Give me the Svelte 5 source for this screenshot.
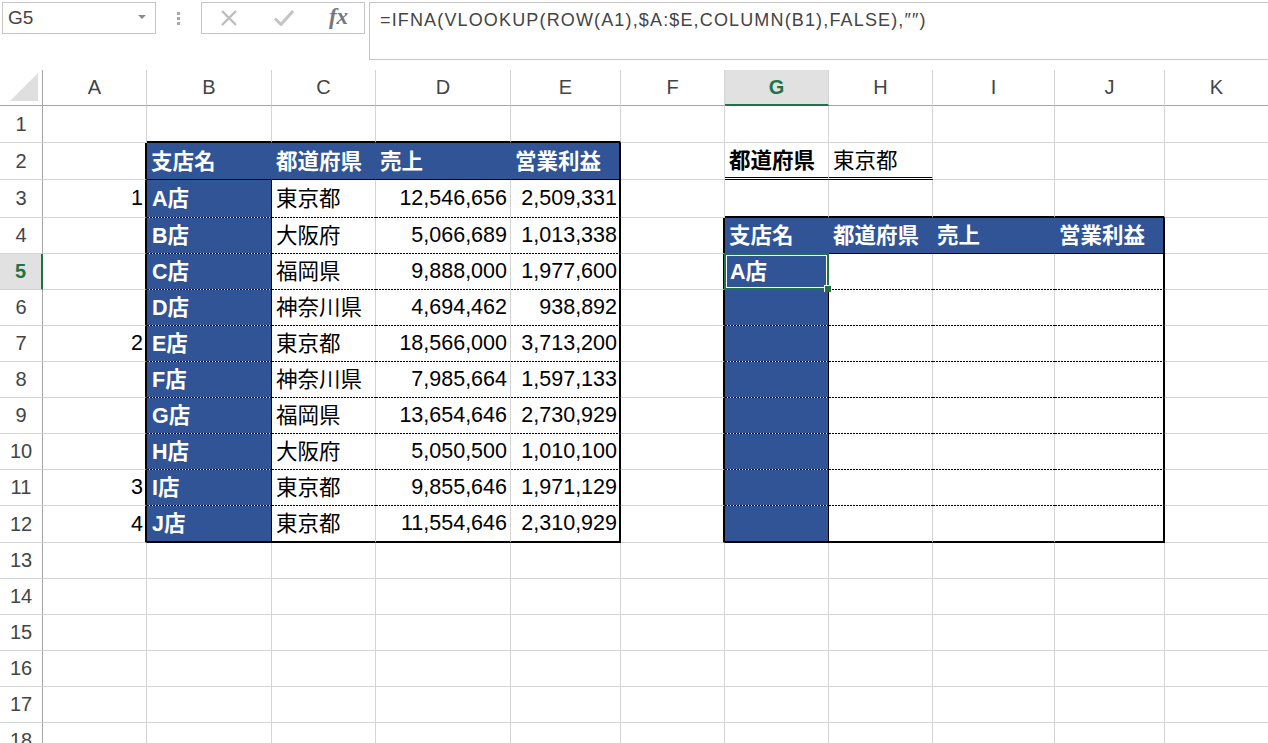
<script>
  const columns = ['A', 'B', 'C', 'D', 'E', 'F', 'G', 'H', 'I', 'J', 'K'];
  const rowCount = 18;

  const stores = [
    ['A店', '東京都', '12,546,656', '2,509,331', '1'],
    ['B店', '大阪府', '5,066,689', '1,013,338', ''],
    ['C店', '福岡県', '9,888,000', '1,977,600', ''],
    ['D店', '神奈川県', '4,694,462', '938,892', ''],
    ['E店', '東京都', '18,566,000', '3,713,200', '2'],
    ['F店', '神奈川県', '7,985,664', '1,597,133', ''],
    ['G店', '福岡県', '13,654,646', '2,730,929', ''],
    ['H店', '大阪府', '5,050,500', '1,010,100', ''],
    ['I店', '東京都', '9,855,646', '1,971,129', '3'],
    ['J店', '東京都', '11,554,646', '2,310,929', '4']
  ];

  const header = ['支店名', '都道府県', '売上', '営業利益'];

  // text by cell address
  const values = {};
  header.forEach((h, i) => {
    values['BCDE'[i] + 2] = h;
    values['GHIJ'[i] + 4] = h;
  });
  stores.forEach((s, i) => {
    const r = i + 3;
    values['A' + r] = s[4];
    values['B' + r] = s[0];
    values['C' + r] = s[1];
    values['D' + r] = s[2];
    values['E' + r] = s[3];
  });
  values.G2 = '都道府県';
  values.H2 = '東京都';
  values.G5 = 'A店';

  // Both tables are described by the same box, so the borders come out the same
  const tables = [
    { cols: 'BCDE', before: 'A', top: 2, bottom: 12 },
    { cols: 'GHIJ', before: 'F', top: 4, bottom: 12 }
  ];

  function cellClass(col, row) {
    const out = [];
    if ('ADE'.includes(col) && row >= 3 && row <= 12) out.push('number');
    if (col === 'D' && row >= 3 && row <= 12) out.push('wide-pad');
    if (col === 'G' && row === 2) out.push('bold');

    for (const t of tables) {
      const inCols = t.cols.includes(col);
      const last = t.cols[t.cols.length - 1];
      const first = t.cols[0];
      if (col === t.before && row >= t.top && row <= t.bottom) out.push('thick-right');
      if (inCols && row === t.top - 1) out.push('thick-bottom');
      if (inCols && row >= t.top && row <= t.bottom) {
        if (row === t.top) out.push('head');
        if (col === first && row > t.top) out.push('side', 'line-right');
        if (col === last) out.push('thick-right');
        if (row === t.bottom) out.push('thick-bottom');
        else if (row === t.top) out.push('line-bottom');
        else out.push('dash-bottom');
      }
    }
    if ((col === 'G' || col === 'H') && row === 2) out.push('double-bottom');
    return out.join(' ');
  }

  const rows = Array.from({ length: rowCount }, (_, i) => i + 1);
</script>

<div class="window">
  <div class="formula-row">
    <div class="name-box">
      <span>G5</span>
      <svg class="caret" width="8" height="4" viewBox="0 0 8 4"><path d="M0 0h8L4 4z" fill="#8a8a8a" /></svg>
    </div>
    <div class="grip"><i></i><i></i><i></i></div>
    <div class="buttons">
      <svg width="18" height="16" viewBox="0 0 18 16">
        <path d="M2 1l14 14M16 1L2 15" stroke="#bdbdbd" stroke-width="2.4" fill="none" />
      </svg>
      <svg width="20" height="16" viewBox="0 0 20 16">
        <path d="M1 8.5l6 6L19 1" stroke="#c4c4c4" stroke-width="3" fill="none" />
      </svg>
      <span class="fx">fx</span>
    </div>
    <div class="formula">=IFNA(VLOOKUP(ROW(A1),$A:$E,COLUMN(B1),FALSE),″″)</div>
  </div>

  <div class="sheet">
    <div class="corner">
      <svg width="30" height="30" viewBox="0 0 30 30"><path d="M29 1v28H1z" fill="#dfdfdf" /></svg>
    </div>
    {#each columns as col}
      <div class="col-head" class:active={col === 'G'}>{col}</div>
    {/each}

    {#each rows as row}
      <div class="row-head" class:active={row === 5}>{row}</div>
      {#each columns as col}
        <div class="cell {cellClass(col, row)}">
          {values[col + row] ?? ''}
          {#if col === 'G' && row === 5}
            <div class="selection"><div class="handle"></div></div>
          {/if}
        </div>
      {/each}
    {/each}
  </div>
</div>

<style>
  :global(body) {
    margin: 0;
    background: #fff;
  }

  .window {
    width: 1268px;
    height: 743px;
    overflow: hidden;
    font-family: "Liberation Sans", "Noto Sans CJK JP", sans-serif;
    color: #000;
  }

  /* formula bar */
  .formula-row {
    height: 70px;
    display: flex;
    align-items: flex-start;
    padding: 2px 0 0 2px;
    box-sizing: border-box;
  }
  .name-box {
    width: 154px;
    height: 32px;
    box-sizing: border-box;
    border: 1px solid #c6c6c6;
    display: flex;
    align-items: center;
    justify-content: space-between;
    padding: 0 9px 0 5px;
    font-size: 19px;
    color: #444;
  }
  .caret { margin-top: -3px; }
  .grip {
    width: 45px;
    height: 32px;
    display: flex;
    flex-direction: column;
    align-items: center;
    justify-content: center;
    gap: 2px;
  }
  .grip i {
    width: 3px;
    height: 3px;
    background: #a8a8a8;
  }
  .buttons {
    width: 164px;
    height: 32px;
    box-sizing: border-box;
    border: 1px solid #c6c6c6;
    display: grid;
    grid-template-columns: 54px 55px 55px;
    align-items: center;
    justify-items: center;
  }
  .fx {
    font-family: "Liberation Serif", serif;
    font-style: italic;
    font-weight: bold;
    font-size: 23px;
    color: #777;
    margin-top: -3px;
  }
  .formula {
    flex: 1;
    height: 58px;
    margin-left: 4px;
    box-sizing: border-box;
    border: 1px solid #c6c6c6;
    border-right: none;
    padding: 7px 0 0 10px;
    font-size: 18px;
    letter-spacing: 1.15px;
    color: #444;
    white-space: nowrap;
  }

  /* worksheet */
  .sheet {
    display: grid;
    grid-template-columns: 43px 104px 125px 104px 135px 110px 104px 104px 104px 122px 110px 104px;
    grid-template-rows: 36px 37px 37px 38px repeat(8, 36px) 37px repeat(6, 36px);
    font-size: 21.5px;
  }
  .corner {
    box-sizing: border-box;
    border-right: 1px solid #a6a6a6;
    border-bottom: 1px solid #a6a6a6;
    display: flex;
    align-items: flex-end;
    justify-content: flex-end;
    padding: 0 3px 3px 0;
  }
  .corner svg { flex: none; }
  .col-head {
    box-sizing: border-box;
    border-right: 1px solid #d4d4d4;
    border-bottom: 1px solid #a6a6a6;
    display: flex;
    align-items: center;
    justify-content: center;
    font-size: 20px;
    color: #444;
  }
  .col-head.active {
    background: #e1e1e1;
    border-bottom: 2px solid #217346;
    color: #217346;
    font-weight: bold;
  }
  .row-head {
    box-sizing: border-box;
    border-right: 1px solid #a6a6a6;
    border-bottom: 1px solid #d4d4d4;
    display: flex;
    align-items: center;
    justify-content: center;
    font-size: 20px;
    color: #444;
  }
  .row-head.active {
    background: #e1e1e1;
    border-right: 2px solid #217346;
    color: #217346;
    font-weight: bold;
  }

  .cell {
    position: relative;
    box-sizing: border-box;
    border-right: 1px solid #d4d4d4;
    border-bottom: 1px solid #d4d4d4;
    display: flex;
    align-items: center;
    padding: 0 2px 4px 4px;
    white-space: nowrap;
  }
  .number {
    justify-content: flex-end;
    padding-bottom: 0;
  }
  .wide-pad { padding-right: 3px; }
  .bold { font-weight: bold; }
  .head {
    background: #305496;
    border-right-color: #305496;
    color: #fff;
    font-weight: bold;
  }
  .side {
    background: #305496;
    color: #fff;
    font-weight: bold;
    padding-left: 5px;
    padding-bottom: 5px;
  }
  .line-right { border-right: 1px solid #000; }
  .line-bottom { border-bottom: 1px solid #000; }
  .dash-bottom::after {
    content: "";
    position: absolute;
    left: 0;
    right: -1px;
    bottom: -1px;
    height: 1px;
    background: repeating-linear-gradient(90deg, #000 0 2px, #fff 2px 3px);
  }
  .thick-right { border-right: 2px solid #000; }
  .thick-bottom { border-bottom: 2px solid #000; }
  .double-bottom { border-bottom: 3px double #000; }

  .selection {
    position: absolute;
    inset: -1px -1px -1px -1px;
    border: 2px solid #217346;
    outline: 1px solid #fff;
    outline-offset: -3px;
    z-index: 1;
  }
  .handle {
    position: absolute;
    right: -4px;
    bottom: -4px;
    width: 6px;
    height: 6px;
    background: #217346;
    border: 1px solid #fff;
    border-width: 1px 0 0 1px;
  }
</style>
